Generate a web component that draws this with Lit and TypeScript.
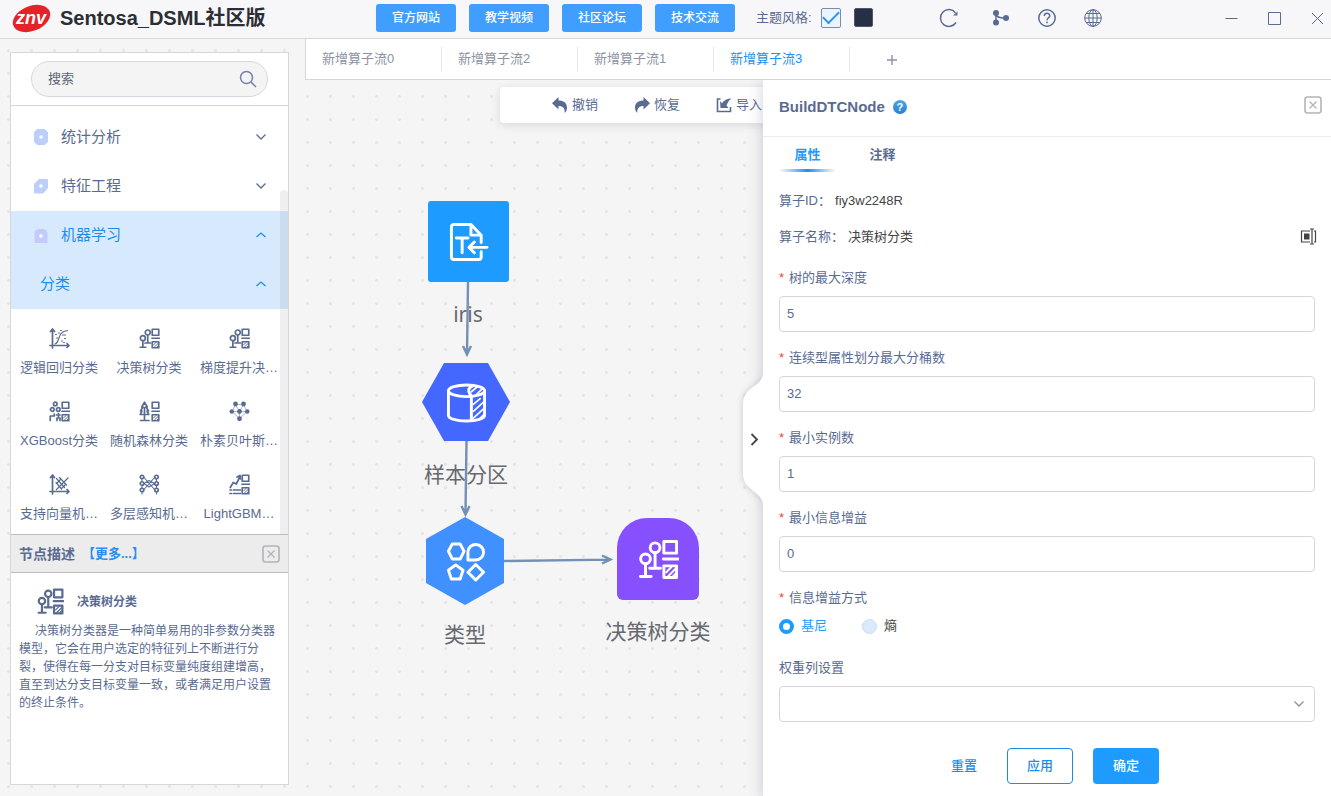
import { LitElement, html, svg, css } from "lit";
import { customElement, state } from "lit/decorators.js";
import { classMap } from "lit/directives/class-map.js";

const hatchedBoxes = svg`
  <path d="M25.5 1.5h13v12h-13zM25 19.5h15M25.5 26.5h13v12h-13z" />
  <path d="M28 33l5-5M29 38l9-9M34 38l4-4" stroke-width="2" />`;

const axes = svg`<path d="M6 1v33h33M2 6l4-5 4 5M35 30l4 4-4 4M1 34h5v5" />`;

const glyphs = {
  tree: svg`
    <circle cx="6.7" cy="19.3" r="5" /><circle cx="16.5" cy="8" r="5" />
    <path d="M6.7 24.5v13M1.5 37.5h11M16.5 13v16M11 29h11" />${hatchedBoxes}`,
  logistic: svg`${axes}
    <path d="M11 31C22 28 14 6 36 4" stroke-width="2.4" />
    <path d="M12 12h2M18 9h2M14 19h2M24 25h2M30 20h2M28 28h2M22 4h2M26 13h6" stroke-width="2.4" />`,
  boost: svg`
    <circle cx="11.5" cy="5" r="3.6" /><circle cx="5.5" cy="16" r="3.6" /><circle cx="17.5" cy="16" r="3.6" />
    <path d="M1.5 38v-9h8v-4M14 27h7M18 24v6M15 38v-5h6v5" />${hatchedBoxes}`,
  forest: svg`
    <path d="M10 1.5L4.5 11h2.5L2 19h3L1.5 26h17L15 19h3l-5-8h2.5zM10 12v25.500M2 38h17" />${hatchedBoxes}`,
  bayes: svg`
    <path d="M12 6h16M12 6l8 14 8-14M5 20h30M20 20v14M12 6L5 20l15 14 15-14-7-14" stroke-width="1" />
    <g fill="currentColor" stroke="none"><circle cx="12" cy="5" r="4.8" /><circle cx="28" cy="5" r="4.8" />
    <circle cx="4.5" cy="20" r="4.5" /><circle cx="20" cy="20" r="4.8" /><circle cx="35.5" cy="20" r="4.5" /><circle cx="20" cy="34.5" r="4.8" /></g>`,
  svm: svg`${axes}
    <path d="M14 8l16 18M20 6l14 15M13 16l11 13" stroke-width="2.400" /><path d="M14 30L37 7M22 10l-7 7M32 20l-8 8" stroke-width="2.400" />`,
  mlp: svg`
    <circle cx="5" cy="5" r="3.500" /><circle cx="5" cy="18" r="3.500" /><circle cx="5" cy="31" r="3.500" />
    <circle cx="34" cy="5" r="3.500" /><circle cx="34" cy="18" r="3.500" /><circle cx="34" cy="31" r="3.500" />
    <path d="M9 6l21 24M9 30L30 6M9 18l10-6 11 6M9 18l10 7 11-7M5 35v4M34 35v4M5 9v5M34 9v5M5 22v5M34 22v5" stroke-width="2.200" />`,
  lightgbm: svg`
    <path d="M1.5 26l6-10 6 3L21 4M15 5l6-3 1 7M1 31h3M8 31h14M1 38h3M8 38h14" />${hatchedBoxes}`,
  reader: svg`
    <path d="M33 21v-7.500L22.500 2.500H5a2.500 2.500 0 0 0-2.500 2.500v31A2.500 2.500 0 0 0 5 38.500h25.500a2.500 2.500 0 0 0 2.500-2.500v-5.500M22.500 3v10.500H33" />
    <path d="M7.500 16.500h12M13.500 16.500v15M39 26H21M26 20.500L20.500 26l5.500 5.500" />`,
  partition: svg`
    <ellipse cx="20" cy="8" rx="18.500" ry="6" />
    <path d="M1.500 8v25c0 3.500 8 6 18.500 6s18.500-2.500 18.500-6V8M25 14v24.500M25 13.500c-4-5-4-8 2-11" />
    <path d="M27 22l7-6M27 29l11-10M27 36l11-10M32 38l6-6M25 9l6-5M30 12l6-6" stroke-width="1.700" />`,
  types: svg`
    <path d="M6.500 2h8L18.500 9.500l-4 8h-8l-4-8zM22.500 18.500V10a8 8 0 1 1 8 8.500zM10 23.500l7.500 5.500-3 9h-9l-3-9zM30.500 23l8 8-8 8-8-8z" />`,
};

const glyph = (name: keyof typeof glyphs, cls: string) => html`
  <svg class="glyph ${cls}" viewBox="-1 -1 42 42" aria-hidden="true">${glyphs[name]}</svg>`;

const chevron = (up: boolean) => html`
  <svg class="chevron" viewBox="0 0 12 12" aria-hidden="true">
    <path d=${up ? "M1.5 8L6 4l4.500 4" : "M1.5 3.500L6 8l4.500-4.500"} />
  </svg>`;

const closeBox = html`
  <svg class="close-box" viewBox="0 0 18 18" aria-hidden="true">
    <rect x="1" y="1" width="16" height="16" rx="2.500" stroke-width="1.600" />
    <path d="M5.500 5.500l7 7M12.500 5.500l-7 7" stroke-width="1.400" />
  </svg>`;

const links = ["官方网站", "教学视频", "社区论坛", "技术交流"];
const flows = ["新增算子流0", "新增算子流2", "新增算子流1", "新增算子流3"];

const groups = [
  { label: "统计分析", color: "#bccefc", shape: "M4 0h6l3.500 3v10L10 16H4L.5 13V3z" },
  { label: "特征工程", color: "#bccefc", shape: "M5 1.500h8.500V10L9 15H.5V6z" },
];

const operators: { label: string; icon: keyof typeof glyphs }[] = [
  { label: "逻辑回归分类", icon: "logistic" },
  { label: "决策树分类", icon: "tree" },
  { label: "梯度提升决…", icon: "tree" },
  { label: "XGBoost分类", icon: "boost" },
  { label: "随机森林分类", icon: "forest" },
  { label: "朴素贝叶斯…", icon: "bayes" },
  { label: "支持向量机…", icon: "svm" },
  { label: "多层感知机…", icon: "mlp" },
  { label: "LightGBM…", icon: "lightgbm" },
];

const fields = [
  { id: "depth", label: "树的最大深度", value: "5" },
  { id: "bins", label: "连续型属性划分最大分桶数", value: "32" },
  { id: "instances", label: "最小实例数", value: "1" },
  { id: "gain", label: "最小信息增益", value: "0" },
];

@customElement("app-root")
export class AppRoot extends LitElement {
  @state() private flow = 3;
  @state() private impurity = "gini";

  static styles = css`
    :host {
      --ink: #5a6b91;
      --blue: #1e9bff;
      --line: #d6d7db;
      display: flex;
      flex-direction: column;
      height: 100vh;
      overflow: hidden;
      background: #f5f5f6;
      color: var(--ink);
      font: 13px/20px "Liberation Sans", "Noto Sans CJK SC", sans-serif;
    }
    * { box-sizing: border-box; }
    button, input, select { font: inherit; color: inherit; margin: 0; }
    button { border: 0; background: none; padding: 0; cursor: pointer; }
    a { color: inherit; text-decoration: none; }
    svg { display: block; flex: none; fill: none; stroke: currentColor; }
    h1, h2, h3, p { margin: 0; }

    .header {
      display: flex;
      align-items: center;
      flex: none;
      height: 39px;
      padding: 0 6px 3px 12px;
      border-bottom: 1px solid var(--line);
      background: #f7f7fa;
    }
    .brand { display: flex; align-items: center; gap: 9px; flex: 0 0 364px; }
    .logo { width: 39px; height: 30px; stroke: none; }
    .logo text { font: italic bold 18px "Liberation Sans", sans-serif; fill: #fff; }
    .title { font-size: 20px; line-height: 28px; color: #2c2e33; white-space: nowrap; }
    .links { display: flex; gap: 13px; }
    .link {
      width: 80px;
      border-radius: 3px;
      background: #409eff;
      color: #fff;
      font-size: 12px;
      font-weight: 500;
      line-height: 28px;
      text-align: center;
    }
    .theme { display: flex; align-items: center; margin-left: 21px; gap: 9px; }
    .check {
      appearance: none;
      display: grid;
      place-items: center;
      width: 20px;
      height: 20px;
      border: 1px solid #7d8aa8;
      border-radius: 2px;
      background: #eaf4ff;
    }
    .check:checked::after {
      content: "";
      width: 14px;
      height: 7px;
      margin-bottom: 4px;
      border: solid #2f93f5;
      border-width: 0 0 2px 2px;
      transform: rotate(-45deg);
    }
    .swatch { width: 19px; height: 19px; margin-left: 4px; border: 1px solid #4d5873; border-radius: 2px; background: #272f45; }
    .tools { display: flex; gap: 26px; margin-left: 66px; }
    .tools svg { width: 20px; height: 20px; stroke-width: 1.5; }
    .tools button:first-child { margin-right: 6px; }
    .window { display: flex; gap: 28px; margin-left: auto; }
    .window svg { width: 15px; height: 15px; stroke-width: 1; }

    .body {
      display: flex;
      flex: 1;
      min-height: 0;
      background: #f5f5f5 radial-gradient(circle, #e5e5e8 1px, transparent 2px) -3px 0 / 23px 23px;
    }
    .sidebar {
      display: flex;
      flex-direction: column;
      flex: 0 0 279px;
      margin: 13px 16px 11px 10px;
      border: 1px solid var(--line);
      background: #fff;
    }
    .search { padding: 8px 20px; border-bottom: 1px solid var(--line); }
    .search-box {
      display: flex;
      align-items: center;
      height: 36px;
      padding: 0 10px 0 16px;
      border: 1px solid #d6d7df;
      border-radius: 18px;
      background: #f4f4f4;
    }
    .search-box input { flex: 1; min-width: 0; padding: 0; border: 0; outline: 0; background: none; }
    .search-box input::placeholder { color: #5c6478; opacity: 1; }
    .search-box svg { width: 18px; height: 18px; stroke: #7082ab; stroke-width: 1.5; }
    .menu { position: relative; flex: 1; min-height: 0; padding-top: 7px; overflow: hidden; }
    .group {
      display: flex;
      align-items: center;
      width: 100%;
      height: 49px;
      padding: 0 21px 2px 23px;
      font-size: 15px;
      text-align: left;
    }
    .group span { flex: 1; }
    .group .mark { width: 14px; height: 16px; margin-right: 13px; stroke: none; }
    .open { background: #d7eafd; color: #1e8df0; }
    .nested { padding-left: 29px; }
    .chevron { width: 12px; height: 12px; stroke-width: 1.3; }
    .scroll { position: absolute; right: 0; bottom: 0; top: 84px; width: 8px; border-radius: 4px 4px 0 0; background: rgba(120, 120, 140, 0.12); }
    .operators { display: grid; grid-template-columns: repeat(3, 1fr); padding: 18px 4px 0 3px; row-gap: 13px; }
    .operator { display: flex; flex-direction: column; align-items: center; gap: 9px; height: 60px; padding: 0; min-width: 0; white-space: nowrap; }
    .glyph { stroke-width: 3; stroke-linejoin: round; stroke-linecap: round; }
    .small { width: 21px; height: 21px; margin-top: 1px; stroke-width: 3.4; }
    .medium { width: 27px; height: 27px; stroke-width: 3.4; }
    .large { width: 41px; height: 41px; }
    .detail { flex: 0 0 250px; }
    .detail-head {
      display: flex;
      align-items: center;
      gap: 7px;
      height: 39px;
      padding: 0 8px;
      border: solid #bbbcc0;
      border-width: 1px 0;
      background: #ececec;
    }
    .detail-head h2 { font-size: 14px; }
    .more { margin-right: auto; font-weight: bold; color: #2d8cf0; }
    .close-box { width: 18px; height: 18px; stroke: #b4b4b8; }
    .detail-title { display: flex; align-items: center; gap: 13px; padding: 15px 26px 7px; }
    .detail-title h3 { font-size: 12px; }
    .detail p { padding: 0 8px; font-size: 12px; line-height: 18px; text-indent: 16px; }

    .main { display: flex; flex-direction: column; flex: 1; min-width: 0; }
    .flows { display: flex; flex: none; height: 41px; border: solid var(--line); border-width: 0 0 1px 1px; background: #fff; }
    .flow {
      display: flex;
      align-items: center;
      width: 136px;
      margin: 8px 0;
      padding: 0 16px 1px;
      border-right: 1px solid #e6e7ea;
      color: #8b92a1;
    }
    .flow.active { color: #2190f0; }
    .add { padding: 2px 36px 0; color: #8c93a3; }
    .add svg { width: 12px; height: 12px; stroke-width: 1.400; }
    .work { display: flex; flex: 1; min-height: 0; }
    .canvas { position: relative; flex: 1; min-width: 0; overflow: hidden; }
    .toolbar {
      position: absolute;
      left: 195px;
      top: 7px;
      display: flex;
      align-items: center;
      gap: 36px;
      width: 620px;
      height: 36px;
      padding: 0 52px;
      border-radius: 4px;
      background: #fff;
      box-shadow: 0 2px 10px rgba(60, 70, 100, 0.16);
      white-space: nowrap;
    }
    .toolbar button { display: flex; align-items: center; gap: 4px; }
    .toolbar svg { width: 16px; height: 16px; }
    .node { position: absolute; display: flex; flex-direction: column; align-items: center; width: 120px; gap: 18px; }
    .shape { display: grid; place-items: center; color: #fff; }
    .label { font: 21px/30px "Noto Sans", "Noto Sans CJK SC", sans-serif; color: #666970; white-space: nowrap; }
    .square { width: 81px; height: 81px; border-radius: 3px; background: #1e9bff; }
    .hex { width: 88px; height: 78px; background: #4468ff; clip-path: polygon(25% 0, 75% 0, 100% 50%, 75% 100%, 25% 100%, 0 50%); }
    .hex-tall { width: 78px; height: 88px; background: #4190ff; clip-path: polygon(50% 0, 100% 25%, 100% 75%, 50% 100%, 0 75%, 0 25%); }
    .arch { width: 82px; height: 82px; border-radius: 30px 30px 6px 6px; background: #8650ff; }
    .n-iris { left: 103px; top: 121px; gap: 17px; }
    .n-part { left: 101px; top: 283px; }
    .n-type { left: 100px; top: 437px; gap: 14px; }
    .n-tree { left: 293px; top: 438px; gap: 16px; }
    .edges { position: absolute; left: 0; top: 0; width: 458px; height: 716px; stroke: #7391b6; stroke-width: 2.4; }

    .drawer {
      position: relative;
      z-index: 1;
      display: flex;
      flex-direction: column;
      flex: 0 0 568px;
      background: #fff;
      box-shadow: 0 2px 14px rgba(60, 65, 90, 0.25);
      clip-path: inset(0 0 0 -30px);
    }
    .handle { position: absolute; left: -20px; top: 294px; width: 20px; height: 130px; clip-path: inset(-10px 0 -10px -10px); filter: drop-shadow(0 0 3px rgba(60, 65, 90, 0.25)); }
    .handle svg { width: 20px; height: 130px; stroke: #444; stroke-width: 1.8; }
    .drawer-head { display: flex; align-items: center; flex: none; height: 57px; padding: 0 9px 2px 16px; border-bottom: 1px solid #ebecef; }
    .drawer-head h2 { font-size: 15px; }
    .drawer-head button { margin-left: auto; padding-bottom: 5px; }
    .help { width: 14px; height: 14px; margin-left: 8px; border-radius: 50%; background: linear-gradient(#4aa5ea, #2a7fd0); color: #fff; font-size: 11px; font-weight: bold; line-height: 14px; text-align: center; }
    .tabs { display: flex; gap: 18px; height: 35px; flex: none; padding: 7px 16px 0; }
    .tab { display: flex; flex-direction: column; align-items: center; justify-content: space-between; width: 57px; font-weight: bold; line-height: 22px; }
    .tab.active { color: var(--blue); }
    .tab.active::after { content: ""; width: 100%; height: 3px; background: linear-gradient(90deg, transparent, #1e8df0 50%, transparent); }
    .form { display: flex; flex-direction: column; gap: 15px; padding: 18px 16px 0; }
    .info { display: flex; align-items: center; gap: 4px; height: 21px; }
    .info span:nth-child(2) { flex: 1; color: #444; }
    .info svg { width: 17px; height: 17px; stroke: #444; stroke-width: 1.2; margin-right: -2px; }
    .form .field:nth-of-type(3) { margin-top: 5px; }
    .field { display: flex; flex-direction: column; gap: 8px; min-width: 0; }
    .field > label, .field > .required { padding-top: 1px; }
    .required::before { content: "*"; margin-right: 5px; color: #e8414d; }
    .field input[type="text"], .field select {
      appearance: none;
      width: 100%;
      height: 36px;
      padding: 0 7px 2px;
      border: 1px solid #d5d7dc;
      border-radius: 4px;
      background: #fff;
      outline: 0;
    }
    .select { position: relative; }
    .select svg { position: absolute; right: 10px; top: 12px; color: #8b8f99; pointer-events: none; }
    .radios { display: flex; align-items: flex-start; gap: 35px; height: 26px; }
    .radio { display: flex; align-items: center; gap: 7px; color: #444; }
    .radio input { appearance: none; width: 15px; height: 15px; border: 1px solid #c9dff5; border-radius: 50%; background: #d9eafb; }
    .radio input:checked { border: 4px solid var(--blue); background: #fff; }
    .radio.on { color: var(--blue); }
    .actions { display: flex; align-items: center; justify-content: center; gap: 20px; padding: 11px 0 0 6px; }
    .action { width: 66px; height: 36px; border-radius: 4px; color: #1e8fe8; font-weight: 500; }
    .reset { width: 46px; }
    .apply { border: 1px solid #1e8ae0; }
    .ok { background: var(--blue); color: #fff; }
  `;

  private header() {
    return html`
      <header class="header">
        <div class="brand">
          <svg class="logo" viewBox="0 0 39 30" role="img" aria-label="znv">
            <ellipse cx="19.500" cy="15.500" rx="19.500" ry="12.500" transform="rotate(-22 19.500 15.500)" fill="#e42229" />
            <text x="19" y="21" text-anchor="middle">znv</text>
          </svg>
          <h1 class="title">Sentosa_DSML社区版</h1>
        </div>
        <nav class="links">${links.map((l) => html`<a class="link" href="#">${l}</a>`)}</nav>
        <div class="theme">
          <label for="light">主题风格:</label>
          <input class="check" id="light" type="checkbox" checked />
          <button class="swatch" aria-label="深色"></button>
        </div>
        <div class="tools">
          <button aria-label="刷新">
            <svg viewBox="0 0 20 20"><path d="M17 14.500A8.400 8.400 0 1 1 16.500 4.800" /><path d="M18.500 3.500v4H14z" fill="currentColor" stroke="none" /></svg>
          </button>
          <button aria-label="分支">
            <svg viewBox="0 0 20 20"><g fill="currentColor" stroke="none"><circle cx="5" cy="5" r="3" /><circle cx="5" cy="14.500" r="3" /><circle cx="15" cy="10" r="3" /></g><path d="M5 5v10M5 5c0 4 3 5 10 5" /></svg>
          </button>
          <button aria-label="帮助">
            <svg viewBox="0 0 20 20"><circle cx="10" cy="10" r="8.200" /><path d="M7.300 8c0-3.600 5.400-3.600 5.400-.3 0 2.300-2.700 2.300-2.700 4.500M10 13.600v1.600" /></svg>
          </button>
          <button aria-label="语言">
            <svg viewBox="0 0 20 20"><g stroke-width="1"><circle cx="10" cy="10" r="8.300" /><ellipse cx="10" cy="10" rx="4.200" ry="8.300" /><path d="M10 1.700v16.600M1.700 10h16.600M3 5.500h14M3 14.500h14" /></g></svg>
          </button>
        </div>
        <div class="window">
          <button aria-label="最小化"><svg viewBox="0 0 15 15"><path d="M1.500 8.500h12" /></svg></button>
          <button aria-label="最大化"><svg viewBox="0 0 15 15"><path d="M1.500 2.500h12v12h-12z" /></svg></button>
          <button aria-label="关闭"><svg viewBox="0 0 15 15"><path d="M2 3l11 11M13 3L2 14" /></svg></button>
        </div>
      </header>`;
  }

  private sidebar() {
    return html`
      <aside class="sidebar">
        <div class="search">
          <div class="search-box">
            <input type="text" placeholder="搜索" aria-label="搜索" />
            <svg viewBox="0 0 18 18"><circle cx="7.500" cy="7.500" r="6" /><path d="M12 12l5 5" /></svg>
          </div>
        </div>
        <div class="menu">
          ${groups.map((g) => html`
            <button class="group">
              <svg class="mark" viewBox="0 0 14 16"><path d=${g.shape} fill=${g.color} stroke=${g.color} stroke-width="1" stroke-linejoin="round" /><circle cx="7" cy="8" r="1.800" fill="#fff" /></svg>
              <span>${g.label}</span>${chevron(false)}
            </button>`)}
          <button class="group open">
            <svg class="mark" viewBox="0 0 14 16"><path d="M.5 16V6.500a4.500 4.500 0 0 1 4.500-4.500h4A4.500 4.500 0 0 1 13.500 6.500v9.500z" fill="#c4cbfc" /><circle cx="7" cy="9" r="1.800" fill="#fff" /></svg>
            <span>机器学习</span>${chevron(true)}
          </button>
          <button class="group open nested"><span>分类</span>${chevron(true)}</button>
          <div class="operators">
            ${operators.map((o) => html`<button class="operator">${glyph(o.icon, "small")}<span>${o.label}</span></button>`)}
          </div>
          <div class="scroll"></div>
        </div>
        <section class="detail">
          <div class="detail-head">
            <h2>节点描述</h2>
            <a class="more" href="#">【更多...】</a>
            <button aria-label="关闭">${closeBox}</button>
          </div>
          <div class="detail-title">${glyph("tree", "medium")}<h3>决策树分类</h3></div>
          <p>决策树分类器是一种简单易用的非参数分类器模型，它会在用户选定的特征列上不断进行分裂，使得在每一分支对目标变量纯度组建增高，直至到达分支目标变量一致，或者满足用户设置的终止条件。</p>
        </section>
      </aside>`;
  }

  private canvas() {
    return html`
      <section class="canvas">
        <div class="toolbar">
          <button>
            <svg viewBox="0 0 16 16"><path d="M6.500 0v3.500c5 0 8.500 2.500 8.500 7 0 2-.7 4-2.300 5.500C13 11.500 11 9 6.500 9v3.500L0 6.300z" fill="currentColor" stroke="none" /></svg>撤销
          </button>
          <button>
            <svg viewBox="0 0 16 16"><path d="M9.500 0v3.500C4.500 3.500 1 6 1 10.500c0 2 .7 4 2.300 5.500C3 11.500 5 9 9.500 9v3.500L16 6.300z" fill="currentColor" stroke="none" /></svg>恢复
          </button>
          <button>
            <svg viewBox="0 0 16 16"><path d="M4.500 2H1.500v12.500h13V10" stroke-width="1.600" /><path d="M4 4l2 2.300C8 3.500 11 1.500 15.500 1.500 12.500 3.500 11.500 6 10.500 8.500l2 2.500H4.500z" fill="currentColor" stroke="none" /></svg>导入
          </button>
        </div>
        <div class="node n-iris"><div class="shape square">${glyph("reader", "large")}</div><span class="label">iris</span></div>
        <div class="node n-part"><div class="shape hex">${glyph("partition", "large")}</div><span class="label">样本分区</span></div>
        <div class="node n-type"><div class="shape hex-tall">${glyph("types", "large")}</div><span class="label">类型</span></div>
        <div class="node n-tree"><div class="shape arch">${glyph("tree", "large")}</div><span class="label">决策树分类</span></div>
        <svg class="edges" viewBox="0 0 458 716">
          <path d="M163 202L162 273M158 266l4 8.500 4-8.500" />
          <path d="M161.500 361L160.500 433M156.500 426l4 8.500 4-8.500" />
          <path d="M199 481L304 479.600M297 475.500l8.500 4-8.500 4" />
        </svg>
      </section>`;
  }

  private radio(value: string, label: string) {
    const on = this.impurity === value;
    return html`
      <label class=${classMap({ radio: true, on })}>
        <input type="radio" name="impurity" .checked=${on} @change=${() => (this.impurity = value)} />${label}
      </label>`;
  }

  private drawer() {
    return html`
      <aside class="drawer">
        <button class="handle" aria-label="收起">
          <svg viewBox="0 0 20 130"><path d="M20 0C19 13 1 12 0 29V101C1 116 19 118 20 130z" fill="#fff" stroke="none" /><path d="M8.500 60l5.500 5.500-5.500 5.500" /></svg>
        </button>
        <div class="drawer-head">
          <h2>BuildDTCNode</h2><span class="help">?</span>
          <button aria-label="关闭">${closeBox}</button>
        </div>
        <div class="tabs">
          <button class="tab active">属性</button>
          <button class="tab">注释</button>
        </div>
        <form class="form" @submit=${(e: Event) => e.preventDefault()}>
          <div class="info"><span>算子ID：</span><span>fiy3w2248R</span></div>
          <div class="info">
            <span>算子名称：</span><span>决策树分类</span>
            <button type="button" aria-label="重命名">
              <svg viewBox="0 0 17 17"><path d="M10 3H1.500v11H10M14 3h1.500v11H14M10 1h4M12 1v15M10 16h4" /><path d="M4 5.500h5.500v6H4z" fill="#444" stroke="none" /></svg>
            </button>
          </div>
          ${fields.map((f) => html`
            <div class="field">
              <label class="required" for=${f.id}>${f.label}</label>
              <input id=${f.id} type="text" .value=${f.value} />
            </div>`)}
          <div class="field" role="radiogroup" aria-labelledby="impurity">
            <span class="required" id="impurity">信息增益方式</span>
            <div class="radios">${this.radio("gini", "基尼")}${this.radio("entropy", "熵")}</div>
          </div>
          <div class="field">
            <label for="weight">权重列设置</label>
            <div class="select"><select id="weight"><option></option></select>${chevron(false)}</div>
          </div>
          <div class="actions">
            <button class="action reset" type="reset">重置</button>
            <button class="action apply" type="button">应用</button>
            <button class="action ok" type="submit">确定</button>
          </div>
        </form>
      </aside>`;
  }

  render() {
    return html`
      ${this.header()}
      <div class="body">
        ${this.sidebar()}
        <main class="main">
          <nav class="flows">
            ${flows.map((f, i) => html`
              <button class=${classMap({ flow: true, active: i === this.flow })} @click=${() => (this.flow = i)}>${f}</button>`)}
            <button class="add" aria-label="新增"><svg viewBox="0 0 12 12"><path d="M6 1v10M1 6h10" /></svg></button>
          </nav>
          <div class="work">${this.canvas()}${this.drawer()}</div>
        </main>
      </div>`;
  }
}
